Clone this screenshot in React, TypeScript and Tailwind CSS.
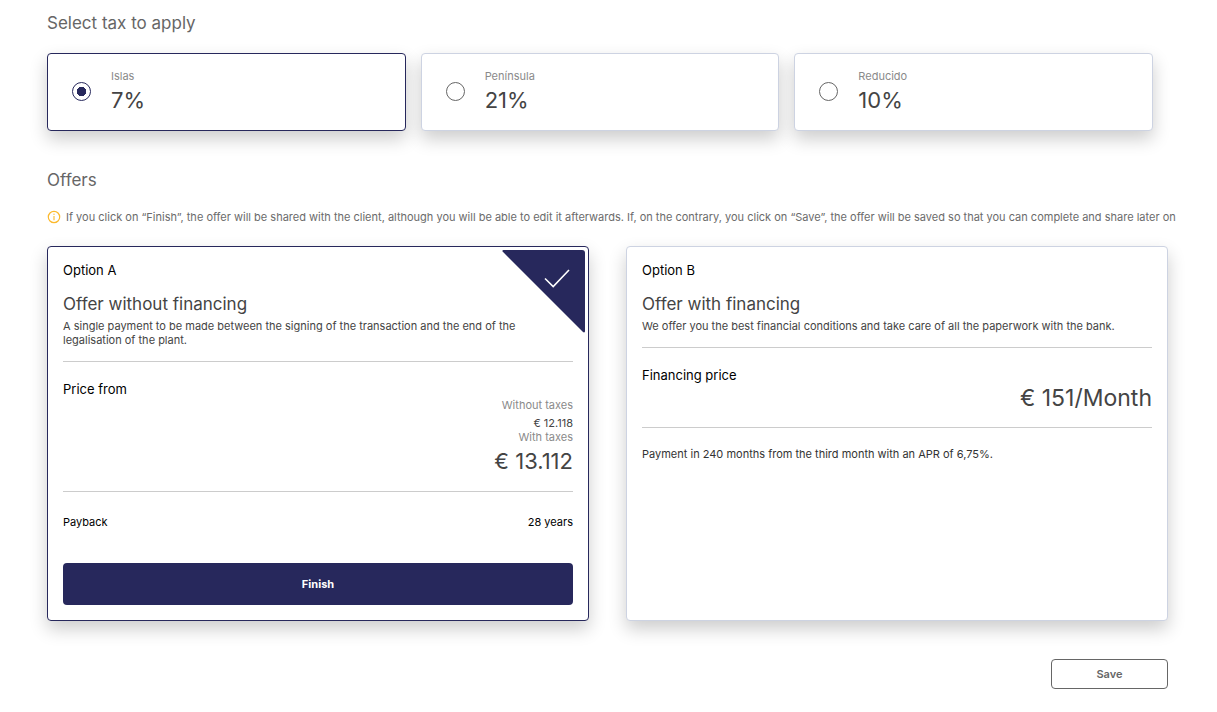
import { useState, type ReactNode } from 'react';

const taxes = [
  { id: 'islas', name: 'Islas', rate: '7%' },
  { id: 'peninsula', name: 'Península', rate: '21%' },
  { id: 'reducido', name: 'Reducido', rate: '10%' },
];

const cardShadow = 'shadow-[0_8px_18px_rgba(0,0,0,0.2)]';

function InfoIcon() {
  return (
    <svg className="size-[14px] shrink-0" viewBox="0 0 14 14" fill="none" aria-hidden="true">
      <circle cx="7" cy="7" r="5.7" stroke="#fcb92c" strokeWidth="1.2" />
      <path d="M7 6v4.2" stroke="#fcc95a" strokeWidth="1.4" />
      <circle cx="7" cy="4.2" r="0.8" fill="#fcc95a" />
    </svg>
  );
}

function SelectedCorner() {
  return (
    <svg
      className="absolute top-[3px] right-[3px] h-[83px] w-[83px]"
      viewBox="0 0 83 83"
      fill="none"
      aria-hidden="true"
    >
      <path d="M1.5 0H80a3 3 0 0 1 3 3v78.5q-0.6 1.6-2 0.6L0.6 1.6Q0 0 1.5 0Z" fill="#27285c" />
      <path d="M43 28.5l8.2 8L67 20" stroke="#fff" strokeWidth="1.6" />
    </svg>
  );
}

function TaxCard({
  id,
  name,
  rate,
  checked,
  onSelect,
}: {
  id: string;
  name: string;
  rate: string;
  checked: boolean;
  onSelect: () => void;
}) {
  return (
    <label
      htmlFor={id}
      className={`flex cursor-pointer items-center gap-5 rounded border bg-white px-6 pt-3.5 pb-4 ${cardShadow} ${
        checked ? 'border-[#27285c]' : 'border-[#cdd3e2]'
      }`}
    >
      <input
        id={id}
        type="radio"
        name="tax"
        checked={checked}
        onChange={onSelect}
        className="size-[19px] shrink-0 appearance-none rounded-full border border-[#666] bg-white checked:border-[#27285c] checked:bg-[radial-gradient(circle,#27285c_4.5px,transparent_5px)]"
      />
      <span className="flex flex-col">
        <span className="text-[11px] leading-4 text-[#8a8a8a]">{name}</span>
        <span className="pt-0.5 text-[22px] leading-7 text-[#444]">{rate}</span>
      </span>
    </label>
  );
}

function OfferCard({
  option,
  title,
  description,
  selected = false,
  children,
}: {
  option: string;
  title: string;
  description: string;
  selected?: boolean;
  children: ReactNode;
}) {
  return (
    <article
      className={`relative rounded border bg-white p-[15px] ${cardShadow} ${
        selected ? 'border-[#27285c]' : 'border-[#cdd3e2]'
      }`}
    >
      {selected && <SelectedCorner />}
      <p className="text-[13px] leading-4 text-black">{option}</p>
      <h3 className="mt-3.5 text-[17px] leading-6 text-[#444]">{title}</h3>
      <p className="mt-[3px] text-[11px] leading-[14px] text-[#444]">{description}</p>
      <hr className="mt-3.5 border-[#ccc]" />
      {children}
    </article>
  );
}

export default function App() {
  const [tax, setTax] = useState('islas');

  return (
    <main className="bg-white pt-[11px] pr-[49px] pb-6 pl-[47px] font-['Inter',sans-serif]">
      <h2 className="text-[17px] leading-6 text-[#666]">Select tax to apply</h2>
      <div className="mt-[18px] grid grid-cols-3 gap-[15px] pr-[15px]">
        {taxes.map((item) => (
          <TaxCard key={item.id} {...item} checked={tax === item.id} onSelect={() => setTax(item.id)} />
        ))}
      </div>

      <h2 className="mt-[37px] text-[17px] leading-6 text-[#666]">Offers</h2>
      <p className="mt-[18px] flex gap-[5px] text-[11px] leading-[14px] text-[#6b6b6b]">
        <InfoIcon />
        <span className="lg:whitespace-nowrap">
          If you click on “Finish”, the offer will be shared with the client, although you will be able to edit it
          afterwards. If, on the contrary, you click on “Save”, the offer will be saved so that you can complete and
          share later on
        </span>
      </p>

      <div className="mt-[22px] grid grid-cols-2 gap-[37px]">
        <OfferCard
          option="Option A"
          title="Offer without financing"
          description="A single payment to be made between the signing of the transaction and the end of the legalisation of the plant."
          selected
        >
          <h4 className="mt-[19px] text-[13px] leading-4 text-black">Price from</h4>
          <div className="text-right text-[#444]">
            <p className="text-[11px] leading-4 text-[#8a8a8a]">Without taxes</p>
            <p className="pt-[3px] text-[11px] leading-[14px]">€ 12.118</p>
            <p className="text-[11px] leading-[14px] text-[#8a8a8a]">With taxes</p>
            <p className="pt-0.5 text-[22px] leading-[30px]">€ 13.112</p>
          </div>
          <hr className="mt-[15px] border-[#ccc]" />
          <div className="mt-[22px] flex justify-between text-[11px] leading-4 text-black">
            <span>Payback</span>
            <span>28 years</span>
          </div>
          <button
            type="button"
            className="mt-[33px] h-[42px] w-full cursor-pointer rounded bg-[#27285c] text-[11px] font-bold text-white"
          >
            Finish
          </button>
        </OfferCard>

        <OfferCard
          option="Option B"
          title="Offer with financing"
          description="We offer you the best financial conditions and take care of all the paperwork with the bank."
        >
          <h4 className="mt-[19px] text-[13px] leading-4 text-black">Financing price</h4>
          <p className="text-right text-[23px] leading-[30px] text-[#444]">€ 151/Month</p>
          <hr className="mt-3.5 border-[#ccc]" />
          <p className="mt-[19px] text-[11px] leading-[14px] text-[#333]">
            Payment in 240 months from the third month with an APR of 6,75%.
          </p>
        </OfferCard>
      </div>

      <div className="mt-[38px] flex justify-end">
        <button
          type="button"
          className="h-[30px] w-[117px] cursor-pointer rounded border border-[#666] bg-white text-[11px] font-semibold text-[#666]"
        >
          Save
        </button>
      </div>
    </main>
  );
}
